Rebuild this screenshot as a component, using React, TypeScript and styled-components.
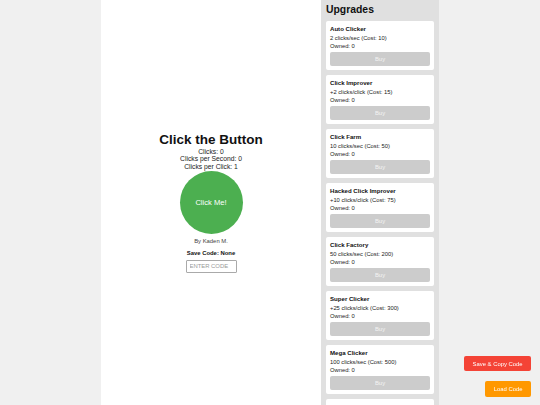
import React, { useState } from "react";
import styled, { createGlobalStyle } from "styled-components";

const GlobalStyle = createGlobalStyle`
  html, body {
    margin: 0;
    padding: 0;
    background: #f0f0f0;
    font-family: "Liberation Sans", Arial, sans-serif;
    overflow: hidden;
  }
  * { box-sizing: border-box; }
`;

const Page = styled.div`
  display: flex;
  justify-content: center;
  height: 100vh;
`;

const Shell = styled.div`
  width: 338px;
  display: flex;
  height: 100vh;
`;

const Main = styled.main`
  flex: 1;
  background: #ffffff;
  display: flex;
  flex-direction: column;
  align-items: center;
  justify-content: center;
  color: #222;
`;

const Title = styled.h1`
  margin: 0;
  font-size: 13.5px;
  line-height: 15.5px;
  font-weight: bold;
  color: #111;
`;

const Stat = styled.div`
  font-size: 6.75px;
  line-height: 7.8px;
  color: #222;
`;

const ClickButton = styled.button`
  width: 63px;
  height: 63px;
  border-radius: 50%;
  border: none;
  background: #4caf50;
  color: #ffffff;
  font-family: inherit;
  font-size: 7.6px;
  padding: 0;
  cursor: pointer;
`;

const Credit = styled.div`
  margin-top: 4.5px;
  font-size: 5.9px;
  line-height: 6.8px;
  color: #444;
`;

const SaveCode = styled.div`
  margin-top: 4.3px;
  font-size: 5.9px;
  line-height: 6.8px;
  font-weight: bold;
  color: #111;
`;

const CodeInput = styled.input`
  margin-top: 3.6px;
  width: 51px;
  height: 13px;
  padding: 0 3px;
  border: 1px solid #aaa;
  border-radius: 1px;
  font-family: inherit;
  font-size: 5.9px;
  color: #333;
  outline: none;
  &::placeholder {
    color: #999;
  }
`;

const Sidebar = styled.aside`
  width: 118px;
  background: #e0e0e0;
  padding: 4px 5px 0;
  overflow: hidden;
`;

const SidebarTitle = styled.h2`
  margin: 0 0 5px;
  font-size: 10.4px;
  line-height: 12px;
  font-weight: bold;
  color: #111;
`;

const UpgradeList = styled.div`
  display: flex;
  flex-direction: column;
  gap: 5px;
`;

const Card = styled.div`
  background: #ffffff;
  border-radius: 2px;
  padding: 4px 4px;
  display: flex;
  flex-direction: column;
`;

const CardTitle = styled.div`
  font-size: 6.1px;
  line-height: 8px;
  font-weight: bold;
  color: #111;
  margin-bottom: 1px;
`;

const CardLine = styled.div`
  font-size: 5.8px;
  line-height: 8px;
  color: #222;
`;

const BuyButton = styled.button`
  margin-top: 2px;
  width: 100%;
  height: 14px;
  border: none;
  border-radius: 2px;
  background: #cccccc;
  color: #f4f4f4;
  font-family: inherit;
  font-size: 5.9px;
  padding: 0;
`;

const FloatingActions = styled.div`
  position: fixed;
  right: 9px;
  bottom: 8px;
  display: flex;
  flex-direction: column;
  align-items: flex-end;
  gap: 10px;
`;

const ActionButton = styled.button<{ $tone: string; $h: number }>`
  background: ${(p) => p.$tone};
  color: #ffffff;
  border: none;
  border-radius: 2px;
  height: ${(p) => p.$h}px;
  padding: 0 8.4px;
  font-family: inherit;
  font-size: 5.9px;
  cursor: pointer;
`;

type Upgrade = { name: string; effect: string; cost: number };

const upgrades: Upgrade[] = [
  { name: "Auto Clicker", effect: "2 clicks/sec", cost: 10 },
  { name: "Click Improver", effect: "+2 clicks/click", cost: 15 },
  { name: "Click Farm", effect: "10 clicks/sec", cost: 50 },
  { name: "Hacked Click Improver", effect: "+10 clicks/click", cost: 75 },
  { name: "Click Factory", effect: "50 clicks/sec", cost: 200 },
  { name: "Super Clicker", effect: "+25 clicks/click", cost: 300 },
  { name: "Mega Clicker", effect: "100 clicks/sec", cost: 500 },
  { name: "Ultra Clicker", effect: "+100 clicks/click", cost: 1000 },
];

export default function App() {
  const [clicks, setClicks] = useState(0);

  return (
    <>
      <GlobalStyle />
      <Page>
        <Shell>
          <Main>
            <Title>Click the Button</Title>
            <Stat>Clicks: {clicks}</Stat>
            <Stat>Clicks per Second: 0</Stat>
            <Stat>Clicks per Click: 1</Stat>
            <ClickButton onClick={() => setClicks((c) => c + 1)}>Click Me!</ClickButton>
            <Credit>By Kaden M.</Credit>
            <SaveCode>Save Code: None</SaveCode>
            <CodeInput placeholder="ENTER CODE" />
          </Main>
          <Sidebar>
            <SidebarTitle>Upgrades</SidebarTitle>
            <UpgradeList>
              {upgrades.map((u) => (
                <Card key={u.name}>
                  <CardTitle>{u.name}</CardTitle>
                  <CardLine>
                    {u.effect} (Cost: {u.cost})
                  </CardLine>
                  <CardLine>Owned: 0</CardLine>
                  <BuyButton disabled>Buy</BuyButton>
                </Card>
              ))}
            </UpgradeList>
          </Sidebar>
        </Shell>
      </Page>
      <FloatingActions>
        <ActionButton $tone="#f44336" $h={15}>Save &amp; Copy Code</ActionButton>
        <ActionButton $tone="#ff9800" $h={16}>Load Code</ActionButton>
      </FloatingActions>
    </>
  );
}
